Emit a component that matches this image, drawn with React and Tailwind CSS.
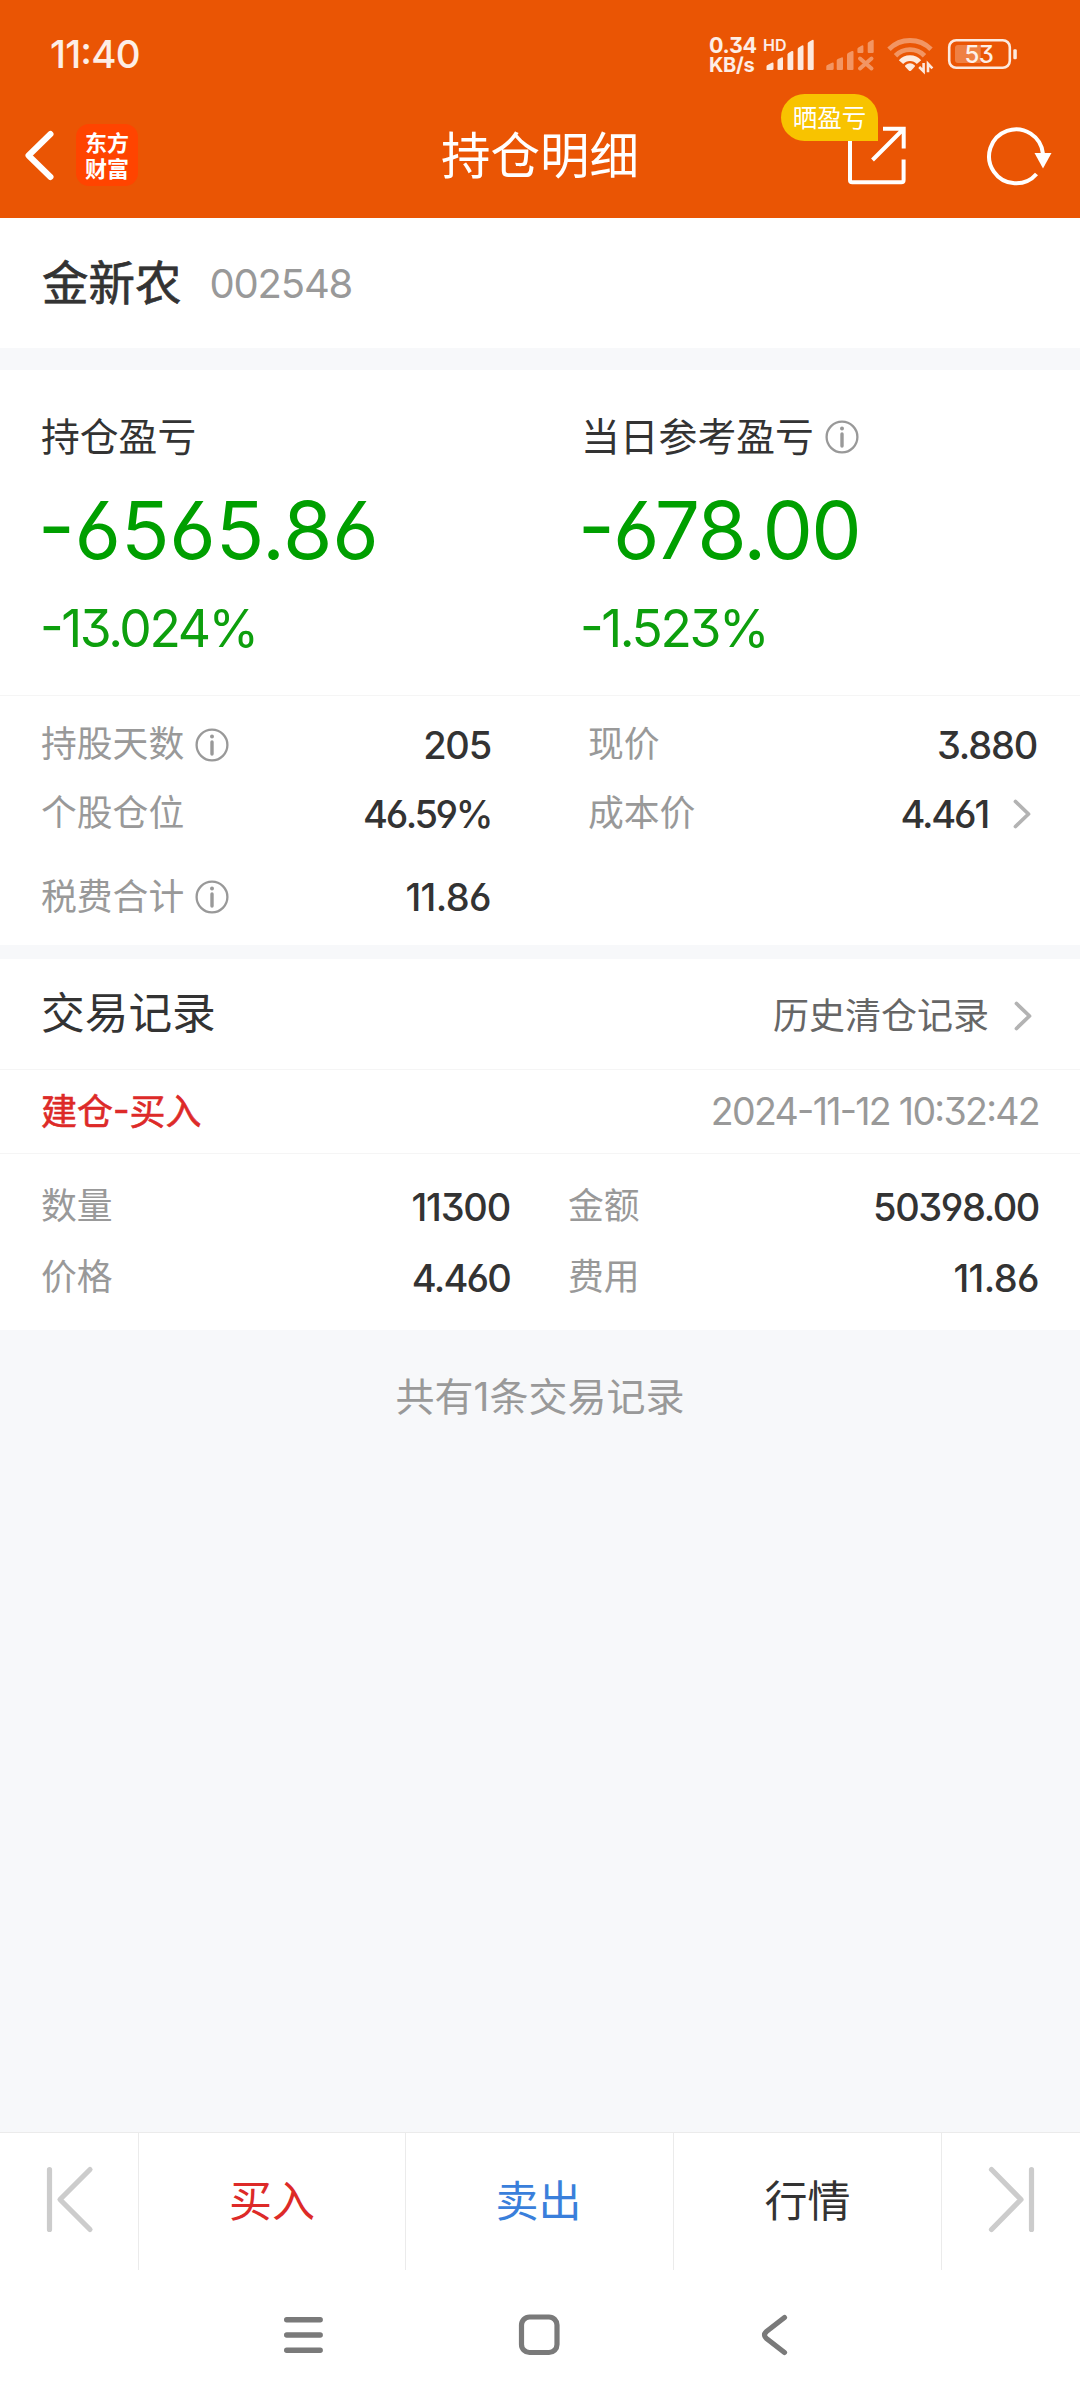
import React from "react";

const Info = () => (
  <svg className="h-[34px] w-[34px] shrink-0" viewBox="0 0 34 34" fill="none">
    <circle cx="17" cy="17" r="15.4" stroke="#999" strokeWidth="2.3" />
    <circle cx="17" cy="8.6" r="2" fill="#999" />
    <path d="M17 14v12" stroke="#999" strokeWidth="3.4" strokeLinecap="round" />
  </svg>
);

const Chevron = () => (
  <svg className="h-[32px] w-[20px] shrink-0" viewBox="0 0 20 32" fill="none">
    <path d="M3.5 3.5L16.5 16L3.5 28.5" stroke="#b3b3b3" strokeWidth="3.8" strokeLinecap="round" strokeLinejoin="round" />
  </svg>
);

const StatusIcons = () => (
  <svg className="h-[44px] w-[264px]" viewBox="760 33 264 44" fill="#fff" fillOpacity="0.87">
    <path d="M766.5 70v-3.5q0-1 1-1.4l4.3-2.4q1.7-.8 1.7 .8v5q0 1.5-1.5 1.5z" />
    <path d="M777.5 69v-8.5q0-1 1-1.5l3-1.6q1.5-.6 1.5 1v10.6q0 1-1 1h-3.5q-1 0-1-1z" />
    <path d="M787.5 69v-14.5q0-1 1-1.6l3.3-1.8q1.5-.6 1.5 1v16.9q0 1-1 1h-3.8q-1 0-1-1z" />
    <path d="M797.7 69v-20q0-1 1-1.6l3.3-1.9q1.5-.6 1.5 1v22.5q0 1-1 1h-3.8q-1 0-1-1z" />
    <path d="M807.7 69v-25.5q0-1 1-1.6l3.5-1.9q1.5-.6 1.5 1v28q0 1-1 1h-4q-1 0-1-1z" />
    <g fillOpacity="0.38">
      <path d="M826.3 70v-3.5q0-1 1-1.4l4.7-2.4q1.7-.8 1.7 .8v5q0 1.5-1.5 1.5z" />
      <path d="M836.7 69v-8.5q0-1 1-1.5l3.8-1.6q1.5-.6 1.5 1v10.6q0 1-1 1h-4.300q-1 0-1-1z" />
      <path d="M847 69v-14.5q0-1 1-1.6l4-1.8q1.5-.6 1.5 1v16.9q0 1-1 1h-4.500q-1 0-1-1z" />
      <path d="M857.4 52v-3q0-1 1-1.6l3.5-1.9q1.5-.6 1.5 1v5.5q0 1-1 1h-4q-1 0-1-1z" />
      <path d="M867.7 52v-8.500q0-1 1-1.600l3.500-1.900q1.500-.6 1.500 1v11q0 1-1 1h-4q-1 0-1-1z" />
    </g>
    <path d="M860 58.5l11.5 10M871.5 58.5l-11.5 10" stroke="#fff" strokeOpacity="0.38" strokeWidth="4" strokeLinecap="round" />
    <g fill="none" stroke="#fff" strokeWidth="4.8">
      <path d="M889 49.3A29.5 29.5 0 0 1 931 49.3" strokeOpacity="0.38" />
      <path d="M895.5 55.7A20.5 20.5 0 0 1 924.5 55.7" strokeOpacity="0.38" />
      <path d="M901 62.2A12 12 0 0 1 919 62.2" strokeOpacity="0.87" strokeWidth="5.8" />
    </g>
    <path d="M905.3 65.300q4.700-4 9.400 0q.6 .7 0 1.400l-3.500 3.900q-1.200 1-2.400 0l-3.500-3.900q-.6-.7 0-1.400z" />
    <path d="M923.6 63v8.300l-4.400-4.300M928 72.300v-8.600l4.400 4.600" fill="none" stroke="#fff" strokeOpacity="0.87" strokeWidth="2.6" />
    <rect x="949.2" y="40.2" width="60.6" height="27.6" rx="7" fill="none" stroke="#fff" strokeOpacity="0.87" strokeWidth="2.6" />
    <path d="M958 45h22.7v18h-22.7q-3 0-3-3v-12q0-3 3-3z" fillOpacity="0.26" />
    <rect x="1013.3" y="49.3" width="3.5" height="10" rx="1.2" />
  </svg>
);

const Stat = ({ label, value, info, arrow, className, tracking = "tracking-[-1.2px]" }) => (
  <div className={"flex items-center " + className}>
    <span className="pt-[1px] text-[35.8px] text-[#999]">{label}</span>
    {info && <span className="ml-[11px]"><Info /></span>}
    <span className={"ml-auto text-[38px] font-medium text-[#333] " + tracking}>{value}</span>
    {arrow && <span className="mr-[5px] ml-[24px] flex"><Chevron /></span>}
  </div>
);

const Profit = ({ label, value, percent, info, className, tracking }) => (
  <div className={"flex flex-col " + className}>
    <div className="flex h-[59px] items-center text-[38.8px] text-[#333]">
      <span className="pt-[1px]">{label}</span>
      {info && <span className="ml-[11px]"><Info /></span>}
    </div>
    <div className={"-ml-[3px] flex h-[128px] items-center text-[80px] text-[#009f00] " + tracking}>{value}</div>
    <div className="-ml-[1px] flex h-[69px] items-center text-[51.5px] tracking-[-2.4px] text-[#0d9f0d]">{percent}</div>
  </div>
);

export default function App() {
  return (
    <div className="flex h-[2400px] w-[1080px] flex-col bg-white font-['Inter','Noto_Sans_CJK_SC',sans-serif] leading-none whitespace-nowrap [font-feature-settings:'cv03','cv04','cv09','case']">
      <header className="h-[218px] bg-[#ea5504] text-white">
        <div className="flex h-[94px] items-start">
          <span className="mt-[35px] ml-[50px] text-[38.5px] font-medium tracking-[-0.8px] text-white/90">11:40</span>
          <div className="relative mt-[33px] mr-[56px] ml-auto flex">
            <div className="mr-[3px] flex w-[48px] flex-col pt-[2px] font-bold tracking-[-0.3px] text-white/90">
              <span className="text-[21.5px] leading-[21px]">0.34</span>
              <span className="text-[20px] leading-[19px]">KB/s</span>
            </div>
            <StatusIcons />
            <span className="absolute top-[4px] left-[54px] text-[16px] font-semibold text-white/90">HD</span>
            <span className="absolute top-[10px] left-[239.5px] w-[61px] text-center text-[24px] font-medium tracking-[-0.5px] text-white/90">53</span>
          </div>
        </div>
        <div className="grid h-[124px] grid-cols-3">
          <div className="flex pt-[30px] pl-[22px]">
            <svg className="mt-[4px] h-[56px] w-[36px]" viewBox="22 128 36 56" fill="none">
              <path d="M50.5 134L28.5 155.5L50.5 177" stroke="#fff" strokeWidth="6" strokeLinecap="round" strokeLinejoin="round" />
            </svg>
            <div className="ml-[18px] flex h-[62px] w-[62px] flex-col items-center justify-center rounded-[13px] bg-[#ff4400] pb-[2px] font-['Noto_Sans_CJK_SC',sans-serif] text-[22px] leading-[26px] font-bold">
              <span>东方</span>
              <span>财富</span>
            </div>
          </div>
          <h1 className="mt-[38px] text-center text-[49.5px]">持仓明细</h1>
          <div className="relative flex pt-[26px] pl-[122px]">
            <svg className="mt-[4px] h-[64px] w-[64px]" viewBox="842 124 64 64" fill="none" stroke="#fff" strokeWidth="4">
              <path d="M850 138V180q0 2.3 2.3 2.3h49q2.3 0 2.3-2.3V159.5" />
              <path d="M883 128.7H903.7V148.5M872.5 160L903 129.5" />
            </svg>
            <svg className="mt-[4px] ml-[78px] h-[64px] w-[72px]" viewBox="984 124 72 64" fill="none" stroke="#fff" strokeWidth="4">
              <path d="M1036.5 174A27 27 0 1 1 1043 154" />
              <path d="M1034.5 153h17l-8.5 15.5z" fill="#fff" stroke="none" />
            </svg>
            <span className="absolute top-0 left-[61px] flex h-[47px] w-[97px] items-center justify-center rounded-[23.5px] rounded-br-none bg-[#f8c300] pt-[1px] text-[24.5px]">晒盈亏</span>
          </div>
        </div>
      </header>

      <section className="flex h-[130px] items-center px-[42px]">
        <span className="text-[46.5px] text-[#333] [-webkit-text-stroke:0.7px_#333]">金新农</span>
        <span className="mt-[2px] ml-[28px] text-[40px] tracking-[-1.2px] text-[#999]">002548</span>
      </section>
      <div className="h-[22px] bg-[#f7f8fa]" />

      <section className="flex h-[326px] border-b border-[#f5f5f5] pt-[37px]">
        <Profit className="w-[540px] pl-[41px]" label="持仓盈亏" value="-6565.86" percent="-13.024%" tracking="tracking-[-0.2px]" />
        <Profit className="w-[540px] pl-[41px]" label="当日参考盈亏" value="-678.00" percent="-1.523%" tracking="tracking-[-1.7px]" info />
      </section>

      <section className="flex h-[249px] justify-between pt-[14px] pr-[43px] pl-[41px]">
        <div className="w-[450px]">
          <Stat className="h-[69px]" label="持股天数" value="205" info />
          <Stat className="h-[69px]" label="个股仓位" value="46.59%" tracking="tracking-[-2.4px]" />
          <Stat className="h-[98px]" label="税费合计" value="11.86" info tracking="tracking-[-0.6px]" />
        </div>
        <div className="w-[449px]">
          <Stat className="h-[69px]" label="现价" value="3.880" />
          <Stat className="h-[69px]" label="成本价" value="4.461" arrow tracking="tracking-[-2.2px]" />
        </div>
      </section>
      <div className="h-[14px] bg-[#f7f8fa]" />

      <section className="flex h-[111px] items-center border-b border-[#f5f5f5] pr-[47px] pl-[41px]">
        <h2 className="text-[43.7px] text-[#333]">交易记录</h2>
        <span className="mt-[4px] ml-auto text-[36px] text-[#666]">历史清仓记录</span>
        <span className="mt-[4px] ml-[24px] flex"><Chevron /></span>
      </section>
      <section className="flex h-[84px] items-center justify-between border-b border-[#f5f5f5] pr-[41px] pl-[41px]">
        <span className="text-[36px] text-[#dd2a28] [-webkit-text-stroke:0.6px_#dd2a28]">建仓-买入</span>
        <span className="text-[37.5px] tracking-[-1.7px] text-[#999]">2024-11-12 10:32:42</span>
      </section>
      <section className="flex h-[176px] justify-between pt-[17px] pr-[41px] pl-[41px]">
        <div className="w-[469px]">
          <Stat className="h-[71px]" label="数量" value="11300" />
          <Stat className="h-[71px]" label="价格" value="4.460" tracking="tracking-[-1.8px]" />
        </div>
        <div className="w-[471px]">
          <Stat className="h-[71px]" label="金额" value="50398.00" tracking="tracking-[-1.4px]" />
          <Stat className="h-[71px]" label="费用" value="11.86" tracking="tracking-[-0.6px]" />
        </div>
      </section>

      <main className="flex-1 bg-[#f7f8fa] pt-[47px] text-center text-[39px] text-[#999]">共有1条交易记录</main>

      <footer>
        <div className="flex h-[138px] border-t border-[#ebebeb] text-[43px]">
          <div className="flex w-[139px] border-r border-[#ebebeb] pt-[32px] pl-[44px]">
            <svg className="h-[70px] w-[52px]" viewBox="44 2165 52 70" fill="none" stroke="#ccc" strokeWidth="5.2" strokeLinecap="round" strokeLinejoin="round">
              <path d="M49.5 2169.5V2229.5M90 2169.5L60 2199.5L90 2229.5" />
            </svg>
          </div>
          <div className="flex w-[267px] items-center justify-center border-r border-[#ebebeb] text-[#dd2a28]">买入</div>
          <div className="flex w-[268px] items-center justify-center border-r border-[#ebebeb] pr-[2px] text-[#3a7fdb]">卖出</div>
          <div className="flex w-[268px] items-center justify-center border-r border-[#ebebeb] text-[#333]">行情</div>
          <div className="flex pt-[32px] pl-[44px]">
            <svg className="h-[70px] w-[52px]" viewBox="986 2165 52 70" fill="none" stroke="#ccc" strokeWidth="5.2" strokeLinecap="round" strokeLinejoin="round">
              <path d="M1031.5 2169.5V2229.5M991.5 2169.5L1021 2199.5L991.5 2229.5" />
            </svg>
          </div>
        </div>
        <nav className="flex h-[130px] gap-[186px] pt-[40px] pl-[278px]">
          <svg className="h-[50px] w-[50px]" viewBox="278 2310 50 50" fill="none" stroke="#7a7a7a" strokeWidth="5.4" strokeLinecap="round">
            <path d="M286.7 2319.7H320.2M286.7 2335H320.2M286.7 2350.3H320.2" />
          </svg>
          <svg className="h-[50px] w-[50px]" viewBox="514 2310 50 50" fill="none" stroke="#7a7a7a" strokeWidth="5.2">
            <rect x="521.5" y="2317" width="35.5" height="35.5" rx="8" />
          </svg>
          <svg className="h-[50px] w-[50px]" viewBox="750 2310 50 50" fill="none" stroke="#7a7a7a" strokeWidth="5.2" strokeLinecap="round">
            <path d="M784.5 2317.5L766.5 2331.5Q762.5 2335 766.5 2338.5L784.5 2352.5" />
          </svg>
        </nav>
      </footer>
    </div>
  );
}
